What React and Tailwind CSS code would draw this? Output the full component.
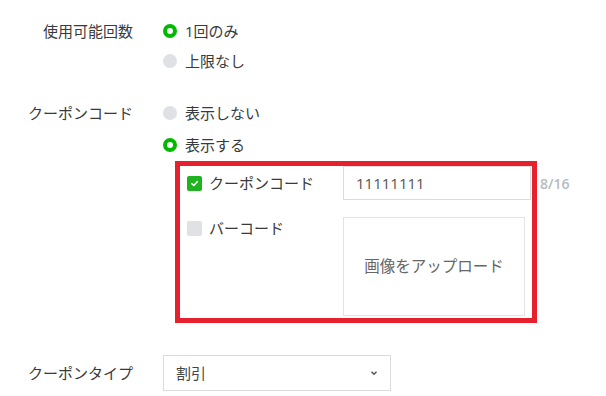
import React, { useState } from 'react';

const Radio = ({ checked, label, onClick, h = 'h-[30px]' }) => (
    <div className={`flex items-center ${h} cursor-pointer`} onClick={onClick}>
        {checked ? (
            <span className="w-[14px] h-[14px] rounded-full border-[4px] border-[#00b900] bg-white" />
        ) : (
            <span className="w-[14px] h-[14px] rounded-full bg-[#dfe1e5]" />
        )}
        <span className="ml-[8px] text-[15px] text-[#3a3a3a]">{label}</span>
    </div>
);

const Checkbox = ({ checked }) =>
    checked ? (
        <span className="w-[15px] h-[15px] rounded-[2px] bg-[#1fb31f] flex items-center justify-center">
            <svg width="9" height="9" viewBox="0 0 10 10">
                <path d="M2 5.2 L4.2 7.2 L8 3" fill="none" stroke="white" strokeWidth="1.8" strokeLinecap="round" strokeLinejoin="round" />
            </svg>
        </span>
    ) : (
        <span className="w-[15px] h-[15px] rounded-[2px] bg-[#dfe1e5]" />
    );

const App = () => {
    const [times, setTimes] = useState('once');
    const [showCode, setShowCode] = useState(true);
    const [code, setCode] = useState('11111111');

    return (
        <div className="w-[606px] h-[396px] bg-white overflow-hidden font-['Open_Sans','Noto_Sans_CJK_JP',sans-serif] text-[#3a3a3a]">
            {/* Usage count */}
            <div className="flex pt-[16px]">
                <div className="w-[133px] h-[30px] flex items-center justify-end text-[15px]">使用可能回数</div>
                <div className="ml-[30px]">
                    <Radio checked={times === 'once'} label="1回のみ" onClick={() => setTimes('once')} />
                    <Radio checked={times === 'none'} label="上限なし" onClick={() => setTimes('none')} />
                </div>
            </div>

            {/* Coupon code */}
            <div className="flex mt-[21px]">
                <div className="w-[133px] h-[32px] flex items-center justify-end text-[15px]">クーポンコード</div>
                <div className="ml-[30px]">
                    <Radio checked={!showCode} label="表示しない" h="h-[32px]" onClick={() => setShowCode(false)} />
                    <Radio checked={showCode} label="表示する" h="h-[32px]" onClick={() => setShowCode(true)} />
                </div>
            </div>

            <div className="ml-[175px] w-[362px] h-[162px] border-[5px] border-[#e6202d]">
                <div className="flex items-center relative">
                    <div className="w-[163px] pl-[7px] flex items-center">
                        <Checkbox checked />
                        <span className="ml-[7px] text-[15px]">クーポンコード</span>
                    </div>
                    <input
                        value={code}
                        onChange={(e) => setCode(e.target.value)}
                        className="w-[188px] h-[34px] border border-[#dcdcdc] px-[12px] text-[15px] text-[#555] outline-none"
                    />
                    <span className="absolute left-[360px] text-[14px] font-semibold text-[#b6bac0]">{code.length}/16</span>
                </div>
                <div className="flex mt-[17px]">
                    <div className="w-[163px] pl-[7px] h-[20px] mt-[1px] flex items-center">
                        <Checkbox />
                        <span className="ml-[7px] text-[15px]">バーコード</span>
                    </div>
                    <div className="w-[182px] h-[99px] border border-[#e3e3e3] flex items-center justify-center text-[15.5px] text-[#666]">
                        画像をアップロード
                    </div>
                </div>
            </div>

            {/* Coupon type */}
            <div className="flex items-center mt-[32px]">
                <div className="w-[133px] flex justify-end text-[15px]">クーポンタイプ</div>
                <div className="ml-[30px] w-[228px] h-[36px] border border-[#dcdcdc] flex items-center justify-between pl-[12px] pr-[12px]">
                    <span className="text-[15px] text-[#444]">割引</span>
                    <svg width="8" height="6" viewBox="0 0 8 6">
                        <path d="M1.5 1.8 L4 4.2 L6.5 1.8" fill="none" stroke="#555" strokeWidth="1.5" />
                    </svg>
                </div>
            </div>
        </div>
    );
};

export default App;
